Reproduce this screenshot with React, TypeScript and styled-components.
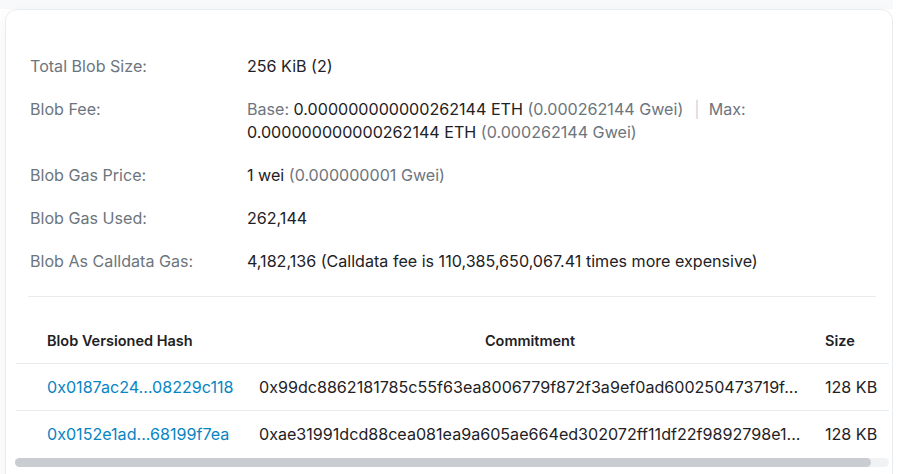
import React from "react";
import styled, { createGlobalStyle } from "styled-components";

const Global = createGlobalStyle`
  html, body { margin: 0; padding: 0; background: #ffffff; }
  body { font-family: Inter, "Liberation Sans", Arial, sans-serif; color: #212529; }
`;

const Page = styled.div`
  width: 893px;
  height: 474px;
  background: linear-gradient(#f8f9fa 0, #f8f9fa 9px, #ffffff 9px);
  padding: 9px 0 0 5px;
  box-sizing: border-box;
  overflow: hidden;
`;

const Card = styled.div`
  background: #ffffff;
  border: 1px solid #e9ecef;
  border-radius: 12px;
  height: 480px;
  box-sizing: border-box;
  box-shadow: 0 0.5rem 1.2rem rgba(189, 197, 209, 0.2);
`;

const Details = styled.div`
  padding: 45px 16px 0 22px;
`;

const Row = styled.div`
  display: grid;
  grid-template-columns: 219px 1fr;
  font-size: 16.1px;
  line-height: 23px;
  & + & { margin-top: 20px; }
`;

const Label = styled.div`
  color: #6c757d;
  padding-left: 2px;
`;

const Value = styled.div`
  color: #1e2125;
`;

const Muted = styled.span`
  color: #6c757d;
`;

const Pipe = styled.span`
  color: #ced4da;
  margin: 0 9px 0 11px;
`;

const Divider = styled.hr`
  border: 0;
  border-top: 1px solid #e9ecef;
  margin: 23px 0 0 0;
`;

const TableWrap = styled.div`
  margin: 22px 0 0 10px;
  width: 873px;
`;

const TableClip = styled.div`
  overflow: hidden;
`;

const Table = styled.table`
  width: 891px;
  table-layout: fixed;
  border-collapse: collapse;
  font-size: 16.1px;
`;

const Th = styled.th<{ $align?: string; $w: number; $pl?: number }>`
  box-sizing: border-box;
  width: ${(p) => p.$w}px;
  text-align: ${(p) => p.$align || "left"};
  font-weight: 600;
  font-size: 14.5px;
  color: #1e2125;
  height: 44px;
  padding: 0 12px 0 ${(p) => p.$pl ?? 12}px;
  border-bottom: 1px solid #e9ecef;
  white-space: nowrap;
`;

const Td = styled.td<{ $pl?: number }>`
  box-sizing: border-box;
  height: 47px;
  padding: 0 12px 0 ${(p) => p.$pl ?? 12}px;
  white-space: nowrap;
  overflow: hidden;
  color: #1e2125;
  tr + tr > & { border-top: 1px solid #e9ecef; }
`;

const Link = styled.a`
  color: #0784c3;
  text-decoration: none;
`;

const ScrollTrack = styled.div`
  margin: 1px 0 0 -1px;
  height: 9px;
  background: #f1f2f4;
  border-radius: 5px;
`;

const ScrollThumb = styled.div`
  height: 100%;
  background: #c9ccd1;
  border-radius: 5px;
`;

const rows = [
  {
    hash: "0x0187ac24...08229c118",
    commitment: "0x99dc8862181785c55f63ea8006779f872f3a9ef0ad600250473719f...",
    size: "128 KB",
  },
  {
    hash: "0x0152e1ad...68199f7ea",
    commitment: "0xae31991dcd88cea081ea9a605ae664ed302072ff11df22f9892798e1...",
    size: "128 KB",
  },
];

export default function App() {
  const visible = 873;
  const content = 891;
  return (
    <>
      <Global />
      <Page>
        <Card>
          <Details>
            <Row>
              <Label>Total Blob Size:</Label>
              <Value>256 KiB (2)</Value>
            </Row>
            <Row>
              <Label>Blob Fee:</Label>
              <Value>
                <Muted>Base: </Muted>0.000000000000262144 ETH <Muted>(0.000262144 Gwei)</Muted>
                <Pipe>|</Pipe>
                <Muted>Max:</Muted>
                <br />
                0.000000000000262144 ETH <Muted>(0.000262144 Gwei)</Muted>
              </Value>
            </Row>
            <Row>
              <Label>Blob Gas Price:</Label>
              <Value>
                1 wei <Muted>(0.000000001 Gwei)</Muted>
              </Value>
            </Row>
            <Row>
              <Label>Blob Gas Used:</Label>
              <Value>262,144</Value>
            </Row>
            <Row>
              <Label>Blob As Calldata Gas:</Label>
              <Value>4,182,136 (Calldata fee is 110,385,650,067.41 times more expensive)</Value>
            </Row>
            <Divider />
          </Details>
          <TableWrap>
            <TableClip>
              <Table>
                <thead>
                  <tr>
                    <Th $w={231} $pl={31}>Blob Versioned Hash</Th>
                    <Th $w={566} $align="center">Commitment</Th>
                    <Th $w={94}>Size</Th>
                  </tr>
                </thead>
                <tbody>
                  {rows.map((r) => (
                    <tr key={r.hash}>
                      <Td $pl={31}>
                        <Link href="#">{r.hash}</Link>
                      </Td>
                      <Td>{r.commitment}</Td>
                      <Td>{r.size}</Td>
                    </tr>
                  ))}
                </tbody>
              </Table>
            </TableClip>
            <ScrollTrack>
              <ScrollThumb style={{ width: `${(visible / content) * 100}%` }} />
            </ScrollTrack>
          </TableWrap>
        </Card>
      </Page>
    </>
  );
}
